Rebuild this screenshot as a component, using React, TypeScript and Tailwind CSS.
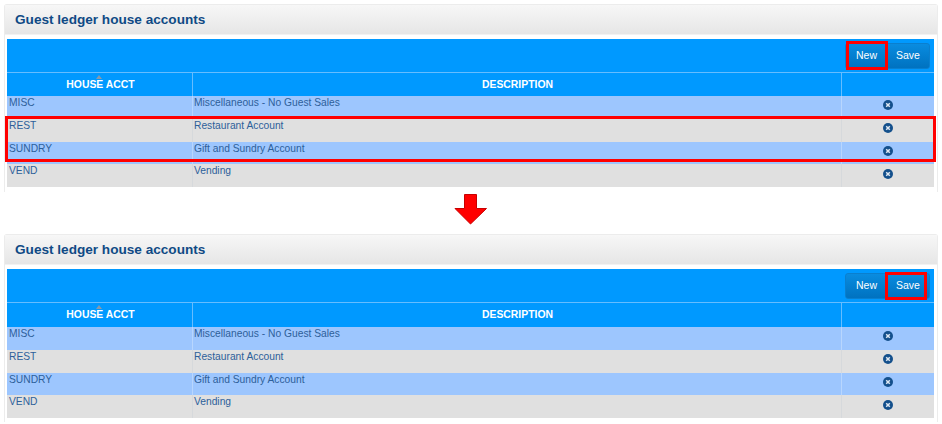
import React from 'react'

const rows = [
  { code: 'MISC', desc: 'Miscellaneous - No Guest Sales', bg: 'bg-[#9dc6fe]', line: 'border-[#b8d6fe]' },
  { code: 'REST', desc: 'Restaurant Account', bg: 'bg-[#e0e0e0]', line: 'border-[#d6d9dc]' },
  { code: 'SUNDRY', desc: 'Gift and Sundry Account', bg: 'bg-[#9dc6fe]', line: 'border-[#b8d6fe]' },
  { code: 'VEND', desc: 'Vending', bg: 'bg-[#e0e0e0]', line: 'border-[#d6d9dc]' },
]

const RemoveIcon = () => (
  <svg width="10" height="10" viewBox="0 0 10 10" className="block">
    <circle cx="5" cy="5" r="5" fill="#14508c" />
    <path d="M3.2 3.2 L6.8 6.8 M6.8 3.2 L3.2 6.8" stroke="#dfe8f2" strokeWidth="1.5" />
  </svg>
)

const Panel = ({ highlight, className }: { highlight: 'new' | 'save'; className: string }) => (
  <div className={`relative mx-1 rounded-t-[3px] border border-b-0 border-[#ececec] bg-white ${className}`}>
    <div
      className={`flex h-[30px] items-center border-b border-[#f2f2f2] bg-gradient-to-b from-[#f7f7f7] to-[#e6e6e6] pl-[10px] text-[13.6px] font-bold text-[#0f4a85] ${
        highlight === 'save' ? 'pt-[2px]' : 'pt-[1px]'
      }`}
    >
      Guest ledger house accounts
    </div>
    <div className="ml-[2px] mr-[3px] mt-[4px] bg-[#f0f0f0]">
      <div className="flex h-[33px] items-center justify-end bg-[#0099ff] pr-[4px]">
        <div className="flex h-[26px] overflow-hidden rounded-[3px] border border-[#0a7fce] bg-gradient-to-b from-[#0a8ce0] to-[#0072c0] text-[10.5px] text-white">
          <div className="flex w-[41px] items-center justify-center">New</div>
          <div className="flex w-[42px] items-center justify-center">Save</div>
        </div>
      </div>
      <div
        className={`grid grid-cols-[186px_649px_1fr] border-t border-[#66bdff] bg-[#0099ff] text-[10.4px] font-bold text-white ${
          highlight === 'save' ? 'h-[25px]' : 'h-[24px]'
        }`}
      >
        <div className="relative flex items-center justify-center border-r border-[#66bdff] pl-[2px]">
          HOUSE ACCT
          <span className="absolute left-[89px] top-[2px] h-0 w-0 border-x-[3.5px] border-b-[4px] border-x-transparent border-b-[#8a9aa8]" />
        </div>
        <div className="flex items-center justify-center border-r border-[#66bdff] pl-[1px]">DESCRIPTION</div>
        <div />
      </div>
      {rows.map((row) => (
        <div
          key={row.code}
          className={`grid h-[22.75px] grid-cols-[186px_649px_1fr] text-[10.25px] leading-[14px] text-[#2d5f9a] ${row.bg}`}
        >
          <div className={`border-r pl-[2px] ${row.line}`}>{row.code}</div>
          <div className={`border-r pl-[1px] ${row.line}`}>{row.desc}</div>
          <div className="flex items-center justify-center pb-[4px]">
            <RemoveIcon />
          </div>
        </div>
      ))}
    </div>
    {highlight === 'new' && (
      <>
        <div className="absolute left-[841px] top-[36px] h-[29px] w-[42px] border-[3px] border-[#ff0000]" />
        <div className="absolute left-0 top-[111px] h-[46px] w-[931px] border-[3px] border-[#ff0000]" />
      </>
    )}
    {highlight === 'save' && (
      <div className="absolute left-[880px] top-[37px] h-[28px] w-[42px] border-[3px] border-[#ff0000]" />
    )}
  </div>
)

export default function App() {
  return (
    <div className="h-[424px] w-[942px] overflow-hidden bg-white font-['Liberation_Sans',Arial,sans-serif]">
      <Panel highlight="new" className="mt-[4px] h-[188px]" />
      <div className="flex h-[42px] items-start justify-center pt-[2px]">
        <svg width="34" height="31" viewBox="0 0 34 31" className="block">
          <path d="M10.5 0.5 H22.5 V14.5 H32.5 L16.5 30 L1 14.5 H10.5 Z" fill="#ff0000" stroke="#c80000" strokeWidth="1" />
        </svg>
      </div>
      <Panel highlight="save" className="h-[188px]" />
    </div>
  )
}
